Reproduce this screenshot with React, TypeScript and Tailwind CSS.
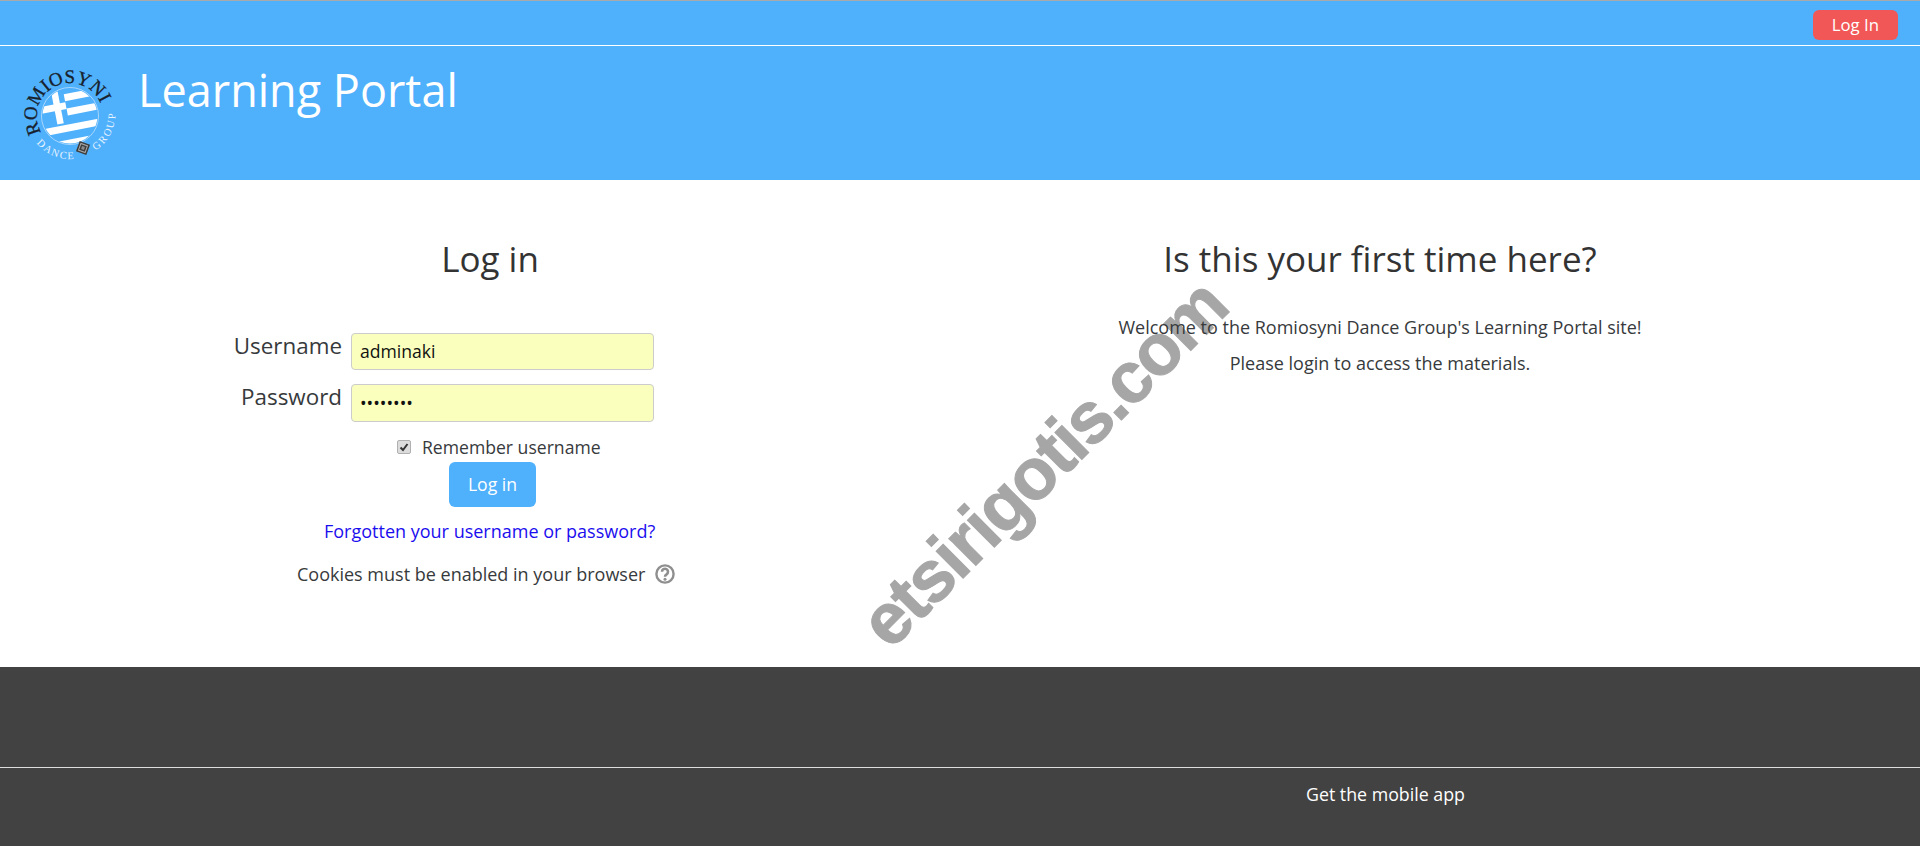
function Logo() {
    return (
        <svg width="100" height="100" viewBox="0 0 100 100" className="shrink-0 overflow-visible">
            <defs>
                <clipPath id="flagClip">
                    <circle cx="50" cy="52" r="27.5" />
                </clipPath>
                <path id="arcTop" d="M 21.4 68.5 A 33 33 0 1 1 83 52" fill="none" />
                <path id="arcBottom" d="M 16.6 79.1 A 43 43 0 0 0 66 92" fill="none" />
                <path id="arcGroup" d="M 75.6 86.4 A 43 43 0 0 0 95 45" fill="none" />
            </defs>
            <circle cx="50" cy="52" r="28.5" fill="none" stroke="#bfe0fb" strokeWidth="0.8" />
            <g clipPath="url(#flagClip)">
                <rect x="10" y="10" width="80" height="85" fill="#4fb0fc" />
                <g transform="rotate(-11 50 52)" fill="#ffffff">
                    <rect x="48" y="29.5" width="40" height="7" />
                    <rect x="48" y="44" width="40" height="7" />
                    <rect x="10" y="60" width="80" height="7" />
                    <rect x="10" y="75" width="80" height="7" />
                    <rect x="18" y="37.5" width="30" height="7" />
                    <rect x="36" y="20" width="6.5" height="38" />
                </g>
            </g>
            <text fontFamily="'Liberation Serif', serif" fontSize="19" fill="#17212b" stroke="#17212b" strokeWidth="0.3">
                <textPath href="#arcTop">ROMIOSYNI</textPath>
            </text>
            <text fontFamily="'Liberation Serif', serif" fontSize="10.5" fill="#e8f4fe" letterSpacing="1.5">
                <textPath href="#arcBottom">DANCE</textPath>
            </text>
            <text fontFamily="'Liberation Serif', serif" fontSize="10.5" fill="#e8f4fe" letterSpacing="2">
                <textPath href="#arcGroup">GROUP</textPath>
            </text>
            <g transform="rotate(20 63 84)">
                <rect x="57.5" y="78.5" width="11" height="11" fill="#3d3d3d" />
                <rect x="59.5" y="80.5" width="7" height="7" fill="none" stroke="#a8a8a8" strokeWidth="1" />
                <rect x="61.5" y="82.5" width="3" height="3" fill="#8c8c8c" />
            </g>
        </svg>
    );
}

export default function App() {
    return (
        <div className="relative h-[846px] overflow-hidden bg-white font-['Open_Sans',sans-serif] text-[#373a3c]">
            {/* Top bar */}
            <div className="flex h-[46px] items-center justify-end border-t border-b border-t-[#a9a9a9] border-b-white bg-[#4fb0fc] pr-[22px]">
                <a className="mt-[3px] rounded-md bg-[#f25757] px-[19px] py-[3px] text-[16.8px] leading-[24px] text-white">Log In</a>
            </div>

            {/* Site header */}
            <div className="flex h-[134px] items-start bg-[#4fb0fc] pl-[20px] pt-[18px] text-white">
                <Logo />
                <h1 className="ml-[18px] mt-[-4px] text-[45px] leading-[60px]">Learning Portal</h1>
            </div>

            {/* Main, sits above the watermark */}
            <div className="relative z-10 flex h-[487px]">
                <div className="w-[980px] pt-[55px]">
                    <h2 className="text-center text-[35px] leading-[48px] text-[#333333]">Log in</h2>
                    <div className="mt-[50px] flex items-start pl-[100px]">
                        <label className="mt-[-2px] w-[242px] text-right text-[22.4px] leading-[30px]">Username</label>
                        <input readOnly value="adminaki" className="ml-[9px] h-[37px] w-[303px] rounded border border-[#cccccc] bg-[#faffbd] px-[8px] pb-[2px] text-[17.6px] text-[#111111]" />
                    </div>
                    <div className="mt-[14px] flex items-start pl-[100px]">
                        <label className="mt-[-2px] w-[242px] text-right text-[22.4px] leading-[30px]">Password</label>
                        <input readOnly type="password" value="12345678" className="ml-[9px] h-[38px] w-[303px] rounded border border-[#cccccc] bg-[#faffbd] px-[8px] text-[17.6px] text-[#111111]" />
                    </div>
                    <div className="mt-[12px] flex h-[26px] items-center pl-[397px]">
                        <span className="flex h-[14px] w-[14px] items-center justify-center rounded-[2px] border border-[#b0b0b0] bg-[#dcdcdc]">
                            <svg width="10" height="10" viewBox="0 0 10 10">
                                <path d="M1.5 5.5 L4 8 L8.5 2" fill="none" stroke="#333333" strokeWidth="2" />
                            </svg>
                        </span>
                        <span className="ml-[11px] text-[17.6px] leading-[24px]">Remember username</span>
                    </div>
                    <div className="mt-[2px] pl-[449px]">
                        <button className="h-[45px] w-[87px] rounded-md bg-[#4fb0fc] text-[17.6px] text-white">Log in</button>
                    </div>
                    <div className="mt-[12px] pl-[324px]">
                        <a className="text-[18px] leading-[24px] text-[#1b0eee]">Forgotten your username or password?</a>
                    </div>
                    <div className="mt-[18px] flex items-center pl-[297px]">
                        <span className="text-[18px] leading-[24px]">Cookies must be enabled in your browser</span>
                        <svg width="20" height="20" viewBox="0 0 20 20" className="ml-[10px]" fill="none" stroke="#8f8f8f" strokeWidth="2.4">
                            <circle cx="10" cy="10" r="8.6" />
                            <path d="M7 7.8 a3 3 0 1 1 4.6 2.5 c-1.1.7-1.6 1.2-1.6 2.4" strokeWidth="2.6" />
                            <circle cx="10" cy="15.2" r="1.5" fill="#8f8f8f" stroke="none" />
                        </svg>
                    </div>
                </div>
                <div className="w-[800px] pt-[55px] text-center">
                    <h2 className="text-[35px] leading-[48px] text-[#333333]">Is this your first time here?</h2>
                    <p className="mt-[32px] text-[18px] leading-[24px]">Welcome to the Romiosyni Dance Group's Learning Portal site!</p>
                    <p className="mt-[12px] text-[18px] leading-[24px]">Please login to access the materials.</p>
                </div>
            </div>

            {/* Footer */}
            <div className="h-[179px] bg-[#424242] text-white">
                <div className="h-[101px] border-b border-b-[#dddddd]" />
                <p className="ml-[1306px] mt-[14px] text-[17.8px] leading-[24px]">Get the mobile app</p>
            </div>

            {/* Watermark */}
            <div className="absolute left-[793px] top-[421px] w-[500px] -rotate-45 text-center font-['Liberation_Sans',sans-serif] text-[72px] font-bold leading-[84px] tracking-[-2px] text-[#a6a6a6] [-webkit-text-stroke:1px_#a6a6a6]">
                etsirigotis.com
            </div>
        </div>
    );
}
